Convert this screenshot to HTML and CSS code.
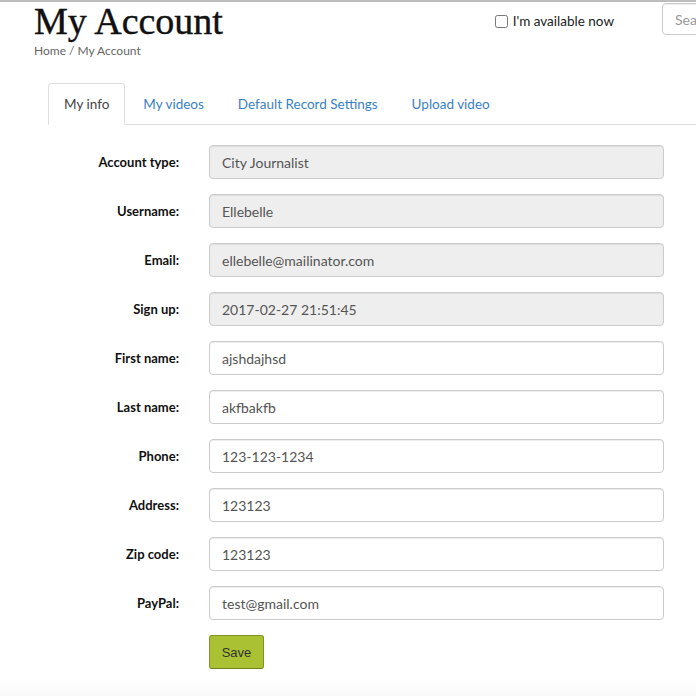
FILE: index.html
```html
<!DOCTYPE html>
<html>
<head>
<meta charset="utf-8">
<link rel="stylesheet" href="styles.css">
</head>
<body>
<div class="page">
  <header class="header">
    <div class="title-block">
      <h1 class="title">My Account</h1>
      <div class="crumbs">Home / My Account</div>
    </div>
    <label class="avail"><input type="checkbox" class="avail-box"> I'm available now</label>
    <div class="search-wrap"><input class="search" type="text" placeholder="Search"></div>
  </header>

  <ul class="tabs">
    <li class="tab active">My info</li>
    <li class="tab">My videos</li>
    <li class="tab">Default Record Settings</li>
    <li class="tab">Upload video</li>
  </ul>

  <form class="form">
    <label class="lbl">Account type:</label><input class="field ro" value="City Journalist" readonly>
    <label class="lbl">Username:</label><input class="field ro" value="Ellebelle" readonly>
    <label class="lbl">Email:</label><input class="field ro" value="ellebelle@mailinator.com" readonly>
    <label class="lbl">Sign up:</label><input class="field ro" value="2017-02-27 21:51:45" readonly>
    <label class="lbl">First name:</label><input class="field" value="ajshdajhsd">
    <label class="lbl">Last name:</label><input class="field" value="akfbakfb">
    <label class="lbl">Phone:</label><input class="field" value="123-123-1234">
    <label class="lbl">Address:</label><input class="field" value="123123">
    <label class="lbl">Zip code:</label><input class="field" value="123123">
    <label class="lbl">PayPal:</label><input class="field" value="test@gmail.com">
    <span></span><div class="actions"><button type="button" class="save">Save</button></div>
  </form>
  <div class="footer"></div>
</div>
</body>
</html>
```
FILE: styles.css
```css
html, body {
  margin: 0;
  padding: 0;
  overflow: hidden;
  background: #fff;
}
body {
  font-family: Lato, "Open Sans", sans-serif;
  color: #333;
  border-top: 2px solid #bdbdbd;
}
.page {
  width: 696px;
}
.header {
  display: flex;
  align-items: flex-start;
  padding-left: 34px;
}
.title-block {
  flex: 1;
}
.title {
  margin: 0;
  font-family: "Liberation Serif", serif;
  font-weight: normal;
  font-size: 38px;
  line-height: 38px;
  color: #111;
  -webkit-text-stroke: 0.4px #111;
}
.crumbs {
  margin-top: 2px;
  font-size: 12px;
  line-height: 18px;
  color: #666;
}
.avail {
  margin-top: 9px;
  display: flex;
  align-items: center;
  font-size: 13.5px;
  line-height: 20px;
  color: #222;
  white-space: nowrap;
}
.avail-box {
  width: 13px;
  height: 13px;
  margin: 0 5px 0 0;
}
.search-wrap {
  margin-left: 48px;
  margin-top: 1px;
  width: 34px;
  overflow: hidden;
  flex-shrink: 0;
}
.search {
  width: 160px;
  height: 32px;
  box-sizing: border-box;
  border: 1px solid #ccc;
  border-radius: 4px;
  padding: 0 12px;
  font-family: Lato, sans-serif;
  font-size: 14px;
  color: #999;
  box-shadow: inset 0 1px 1px rgba(0,0,0,0.075);
}
.search::placeholder {
  color: #999;
}
.tabs {
  list-style: none;
  margin: 23px 0 0 48px;
  padding: 0;
  display: flex;
  border-bottom: 1px solid #ddd;
}
.tab {
  margin-right: 2px;
  margin-bottom: -1px;
  padding: 10px 15px;
  font-size: 13.5px;
  line-height: 20px;
  color: #3a7fc4;
  border: 1px solid transparent;
  border-radius: 4px 4px 0 0;
}
.tab.active {
  color: #444;
  background: #fff;
  border-color: #ddd;
  border-bottom-color: #fff;
}
.form {
  margin-top: 20px;
  display: grid;
  grid-template-columns: 179px 455px;
  column-gap: 30px;
  row-gap: 15px;
  align-items: center;
}
.lbl {
  text-align: right;
  font-weight: bold;
  font-size: 13px;
  color: #111;
}
.field {
  box-sizing: border-box;
  width: 455px;
  height: 34px;
  margin: 0;
  padding: 0 12px;
  border: 1px solid #ccc;
  border-radius: 4px;
  background: #fff;
  font-family: Lato, sans-serif;
  font-size: 14px;
  color: #555;
  box-shadow: inset 0 1px 1px rgba(0,0,0,0.075);
}
.field.ro {
  background: #eee;
}
.actions {
  margin-top: 0;
}
.save {
  width: 55px;
  height: 34px;
  box-sizing: border-box;
  background: #a9c133;
  border: 1px solid #7f9425;
  border-bottom-color: #6f8320;
  border-radius: 3px;
  font-family: "Liberation Sans", sans-serif;
  font-size: 13px;
  color: #333;
  padding: 0;
}
.footer {
  margin-top: 8px;
  height: 40px;
  background: linear-gradient(#fff, #f8f8f8 60%);
}
```
